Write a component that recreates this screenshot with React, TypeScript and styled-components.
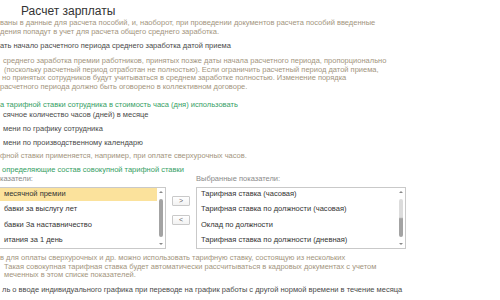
import React from 'react';
import styled, { createGlobalStyle } from 'styled-components';

const GlobalStyle = createGlobalStyle`
  html, body {
    margin: 0;
    padding: 0;
    background: #ffffff;
  }
  body {
    font-family: 'Liberation Sans', Arial, sans-serif;
    font-size: 7.5px;
    color: #4a4a4a;
  }
  * {
    box-sizing: border-box;
  }
`;

const Page = styled.div`
  width: 500px;
  height: 300px;
  overflow: hidden;
`;

const Title = styled.div`
  font-size: 12px;
  line-height: 14px;
  color: #333333;
  padding: 4px 0 0 21px;
  height: 18px;
`;

const Hint = styled.div<{ $top?: number; $indent?: number }>`
  color: #a3957e;
  line-height: 8.7px;
  margin-top: ${(p) => p.$top ?? 0}px;
  padding-left: ${(p) => p.$indent ?? 0}px;
  white-space: nowrap;
`;

const Line = styled.div<{ $indent?: number }>`
  padding-left: ${(p) => p.$indent ?? 0}px;
`;

const Label = styled.div<{ $top?: number; $indent?: number }>`
  color: #4a4a4a;
  line-height: 9px;
  margin-top: ${(p) => p.$top ?? 0}px;
  padding-left: ${(p) => p.$indent ?? 0}px;
  white-space: nowrap;
`;

const GroupTitle = styled.div<{ $top?: number; $indent?: number }>`
  color: #35a064;
  line-height: 9px;
  margin-top: ${(p) => p.$top ?? 0}px;
  padding-left: ${(p) => p.$indent ?? 0}px;
  white-space: nowrap;
`;

const Pickers = styled.div`
  display: grid;
  grid-template-columns: 167px 18px 210px;
  column-gap: 6px;
  margin-top: 0.5px;
  margin-left: -1px;
`;

const ListCaption = styled.div<{ $indent?: number }>`
  color: #8a8a8a;
  line-height: 9px;
  padding-left: ${(p) => p.$indent ?? 0}px;
  margin-bottom: 3.5px;
`;

const ListBox = styled.div`
  position: relative;
  height: 62px;
  border: 1px solid #c9c9c9;
  background: #ffffff;
  overflow: hidden;
`;

const Row = styled.div<{ $selected?: boolean }>`
  height: 13px;
  margin-bottom: 2.5px;
  line-height: 11px;
  padding-left: 4px;
  margin-right: 8px;
  color: #333333;
  white-space: nowrap;
  background: ${(p) => (p.$selected ? '#fbe29c' : 'transparent')};
`;

const ScrollTrack = styled.div`
  position: absolute;
  top: 0;
  right: 1px;
  width: 6px;
  height: 100%;
`;

const Arrow = styled.div<{ $down?: boolean }>`
  position: absolute;
  left: 1px;
  ${(p) => (p.$down ? 'bottom: 3px;' : 'top: 3px;')}
  width: 0;
  height: 0;
  border-left: 2px solid transparent;
  border-right: 2px solid transparent;
  ${(p) => (p.$down ? 'border-top: 2px solid #8a8a8a;' : 'border-bottom: 2px solid #8a8a8a;')}
`;

const Thumb = styled.div<{ $light?: boolean }>`
  position: absolute;
  left: 1px;
  top: 11px;
  width: 4px;
  height: 38px;
  border-radius: 2px;
  background: ${(p) =>
    p.$light
      ? 'linear-gradient(to bottom, #dcdcdc 0%, #dcdcdc 48%, #a3a3a3 52%, #a3a3a3 100%)'
      : '#a3a3a3'};
`;

const Buttons = styled.div`
  display: flex;
  flex-direction: column;
  gap: 9px;
  padding-top: 21.5px;
`;

const MoveButton = styled.button`
  width: 18px;
  height: 10px;
  padding: 0;
  border: 1px solid #c9c9c9;
  border-radius: 1px;
  background: linear-gradient(#ffffff, #f2f2f2);
  font-family: 'Liberation Sans', Arial, sans-serif;
  font-size: 7px;
  line-height: 8px;
  color: #666666;
`;

const leftItems = [
  'месячной премии',
  'бавки за выслугу лет',
  'бавки За наставничество',
  'итания за 1 день',
];

const rightItems = [
  'Тарифная ставка (часовая)',
  'Тарифная ставка по должности (часовая)',
  'Оклад по должности',
  'Тарифная ставка по должности (дневная)',
];

const App = () => (
  <Page>
    <GlobalStyle />
    <Title>Расчет зарплаты</Title>
    <Hint $top={1}>
      <Line>ваны в данные для расчета пособий, и, наоборот, при проведении документов расчета пособий введенные</Line>
      <Line>дения попадут в учет для расчета общего среднего заработка.</Line>
    </Hint>
    <Label $top={5}>ать начало расчетного периода среднего заработка датой приема</Label>
    <Hint $top={6.5}>
      <Line $indent={3}>среднего заработка премии работников, принятых позже даты начала расчетного периода, пропорционально</Line>
      <Line $indent={4}>(поскольку расчетный период отработан не полностью). Если ограничить расчетный период датой приема,</Line>
      <Line $indent={2}>но принятых сотрудников будут учитываться в среднем заработке полностью. Изменение порядка</Line>
      <Line>расчетного периода должно быть оговорено в коллективном договоре.</Line>
    </Hint>
    <GroupTitle $top={8}>а тарифной ставки сотрудника в стоимость часа (дня) использовать</GroupTitle>
    <Label $top={1.5} $indent={3}>сячное количество часов (дней) в месяце</Label>
    <Label $top={5} $indent={3}>мени по графику сотрудника</Label>
    <Label $top={4.5} $indent={3}>мени по производственному календарю</Label>
    <Hint $top={5}>
      <Line>фной ставки применяется, например, при оплате сверхурочных часов.</Line>
    </Hint>
    <GroupTitle $top={4.5} $indent={2}>определяющие состав совокупной тарифной ставки</GroupTitle>
    <Pickers>
      <div>
        <ListCaption $indent={1}>казатели:</ListCaption>
        <ListBox>
          {leftItems.map((item, i) => (
            <Row key={item} $selected={i === 0}>
              {item}
            </Row>
          ))}
          <ScrollTrack>
            <Arrow />
            <Thumb />
            <Arrow $down />
          </ScrollTrack>
        </ListBox>
      </div>
      <Buttons>
        <MoveButton>&gt;</MoveButton>
        <MoveButton>&lt;</MoveButton>
      </Buttons>
      <div>
        <ListCaption>Выбранные показатели:</ListCaption>
        <ListBox>
          {rightItems.map((item) => (
            <Row key={item}>{item}</Row>
          ))}
          <ScrollTrack>
            <Arrow />
            <Thumb $light />
            <Arrow $down />
          </ScrollTrack>
        </ListBox>
      </div>
    </Pickers>
    <Hint $top={5}>
      <Line>в для оплаты сверхурочных и др. можно использовать тарифную ставку, состоящую из нескольких</Line>
      <Line $indent={4}>Такая совокупная тарифная ставка будет автоматически рассчитываться в кадровых документах с учетом</Line>
      <Line $indent={4}>меченных в этом списке показателей.</Line>
    </Hint>
    <Label $top={5} $indent={2}>ль о вводе индивидуального графика при переводе на график работы с другой нормой времени в течение месяца</Label>
  </Page>
);

export default App;
